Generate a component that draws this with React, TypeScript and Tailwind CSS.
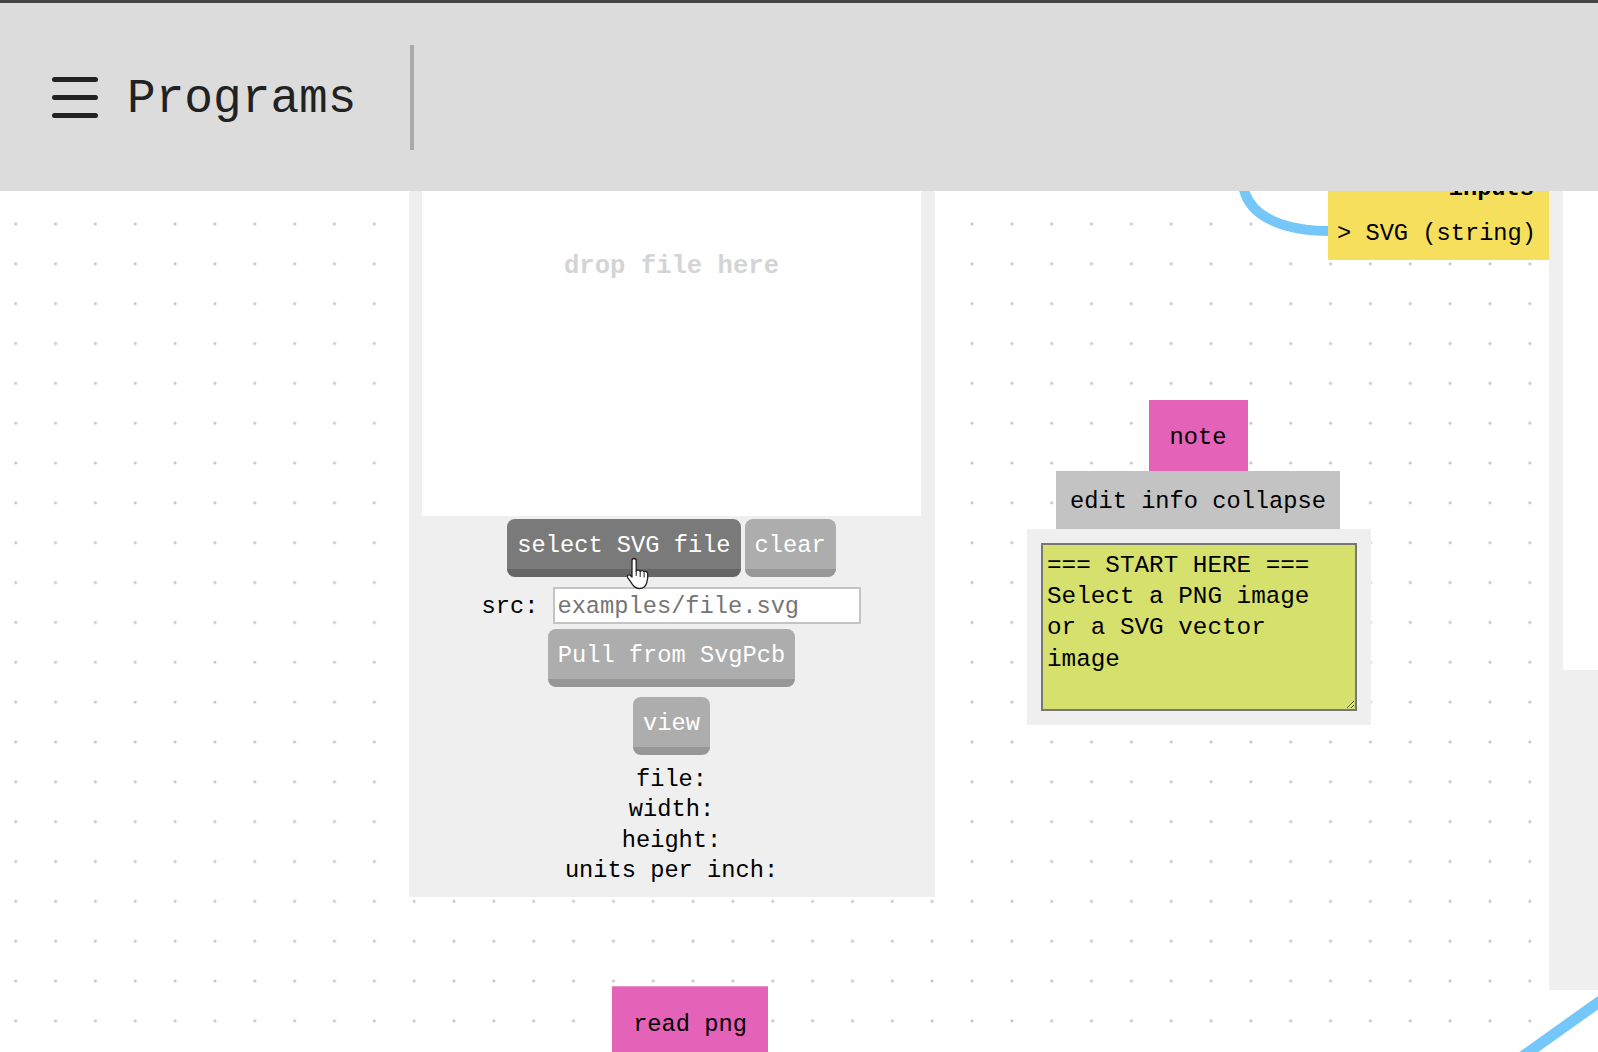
const mono = "font-['Liberation_Mono',monospace]";

function Btn({ label, dark }: { label: string; dark?: boolean }) {
  return (
    <button
      className={
        "flex h-[58px] items-center justify-center rounded-lg border-b-8 px-[10px] pt-[4px] text-[23.7px] leading-none text-white " +
        (dark ? "border-[#666666] bg-[#7a7a7a]" : "border-[#979797] bg-[#adadad]")
      }
    >
      {label}
    </button>
  );
}

function HandCursor() {
  return (
    <svg className="absolute left-[119px] top-[38px]" width="26" height="33" viewBox="0 0 26 33">
      <path
        d="M8 1.5c1.3 0 2.2 1 2.2 2.2v10.5c.3-1.4 3.6-1.6 4 .4.5-1.5 3.4-1.4 3.9.6.7-1.2 3.2-1 3.5 1 .4 3 .2 7-1 10-1 2.7-3.2 5.3-7 5.3-3.4 0-5.6-1.6-7.4-4.4L1.6 20.300c-.9-1.500 1-3.300 2.600-2L6 20V3.700C6 2.500 6.800 1.500 8 1.500z"
        fill="#fff"
        stroke="#222"
        strokeWidth="1.300"
        strokeLinejoin="round"
      />
      <path d="M10.200 14v5M14.200 15v5M18.100 16v4.500" fill="none" stroke="#222" strokeWidth="1" />
    </svg>
  );
}

function FilePanel() {
  return (
    <div className="absolute left-[409px] top-0 flex h-[706px] w-[526px] flex-col items-center bg-[#efefef] pr-[1px]">
      <div className="ml-[13px] flex h-[325px] w-[499px] justify-center self-start bg-white pt-[59px] text-[25.600px] font-bold leading-[34px] text-[#d4d4d4]">
        drop file here
      </div>
      <div className="relative mt-[3px] flex gap-1">
        <Btn label="select SVG file" dark />
        <Btn label="clear" />
        <HandCursor />
      </div>
      <div className="mt-[10px] flex h-[37px] items-center gap-[15px]">
        <span className="pt-[2px] text-[23.700px] text-black">src:</span>
        <input
          readOnly
          placeholder="examples/file.svg"
          className="h-[37px] w-[308px] border-2 border-[#c4c4c4] bg-white px-[2px] pt-[2px] text-[23.700px] placeholder:text-[#757575]"
        />
      </div>
      <div className="mt-[5px]">
        <Btn label="Pull from SvgPcb" />
      </div>
      <div className="mt-[10px]">
        <Btn label="view" />
      </div>
      <div className="mt-[10px] text-center text-[23.700px] leading-[30.300px] text-black">
        <div>file:</div>
        <div>width:</div>
        <div>height:</div>
        <div>units per inch:</div>
      </div>
    </div>
  );
}

function NoteNode() {
  return (
    <div className="absolute left-[1027px] top-[209px] flex w-[344px] flex-col items-center">
      <div className="mr-[2px] flex h-[71px] w-[99px] items-center justify-center bg-[#e463b8] pt-[4px] text-[23.700px] text-black">
        note
      </div>
      <div className="mr-[2px] flex h-[58px] w-[284px] items-center justify-center bg-[#c3c3c3] pt-[4px] text-[23.700px] text-black">
        edit info collapse
      </div>
      <div className="h-[196px] w-full bg-[#efefef] py-[14px] pl-[14px]">
        <textarea
          readOnly
          defaultValue={"=== START HERE ===\nSelect a PNG image\nor a SVG vector\nimage"}
          className="block h-[168px] w-[316px] border-2 border-[#777777] bg-[#d5e06d] px-[4px] py-[5px] text-[24.300px] leading-[31.200px] text-black outline-none"
        />
      </div>
    </div>
  );
}

export default function App() {
  return (
    <div className={"h-[1052px] w-full overflow-hidden bg-white " + mono}>
      <header className="flex h-[191px] items-center border-t-[3px] border-[#444444] bg-[#dcdcdc] pl-[52px]">
        <div className="flex w-[46px] flex-col gap-[13px]">
          <div className="h-[5px] rounded-full bg-[#222222]" />
          <div className="h-[5px] rounded-full bg-[#222222]" />
          <div className="h-[5px] rounded-full bg-[#222222]" />
        </div>
        <h1 className="ml-[29px] pt-[6px] text-[47.800px] font-normal leading-none text-[#222222]">Programs</h1>
        <div className="ml-[54px] h-[105px] w-[4px] bg-[#aaaaaa]" />
      </header>

      <main className="relative h-[861px] overflow-hidden bg-[radial-gradient(circle,#c6c6c6_1.400px,transparent_1.700px)] bg-size-[39.850px_39.850px] bg-position-[-4.200px_13.100px]">
        <svg className="absolute inset-0" width="1598" height="861" viewBox="0 0 1598 861" fill="none">
          <path d="M1243 -6C1248 28 1288 40 1330 40" stroke="#75c6f9" strokeWidth="10" />
          <path d="M1519 868L1606 806" stroke="#75c6f9" strokeWidth="11" />
        </svg>

        <FilePanel />
        <NoteNode />

        <div className="absolute left-[1328px] top-0 flex h-[69px] w-[221px] flex-col items-end overflow-hidden whitespace-nowrap bg-[#f5df5c] pr-[15px] text-[23.700px] text-black">
          <div className="-mt-[14px] h-[24px] font-bold leading-[24px]">inputs</div>
          <div className="mt-[18px] w-full pl-[9px] leading-[30px]">&gt; SVG (string)</div>
        </div>

        <div className="absolute left-[1549px] top-0 h-[799px] w-[49px] bg-[#efefef]">
          <div className="ml-[14px] h-[479px] bg-white" />
        </div>

        <div className="absolute left-[612px] top-[795px] flex h-[76px] w-[156px] items-center justify-center border-t border-[#ee8fcd] bg-[#e463b8] text-[23.700px] text-black">
          read png
        </div>
      </main>
    </div>
  );
}
